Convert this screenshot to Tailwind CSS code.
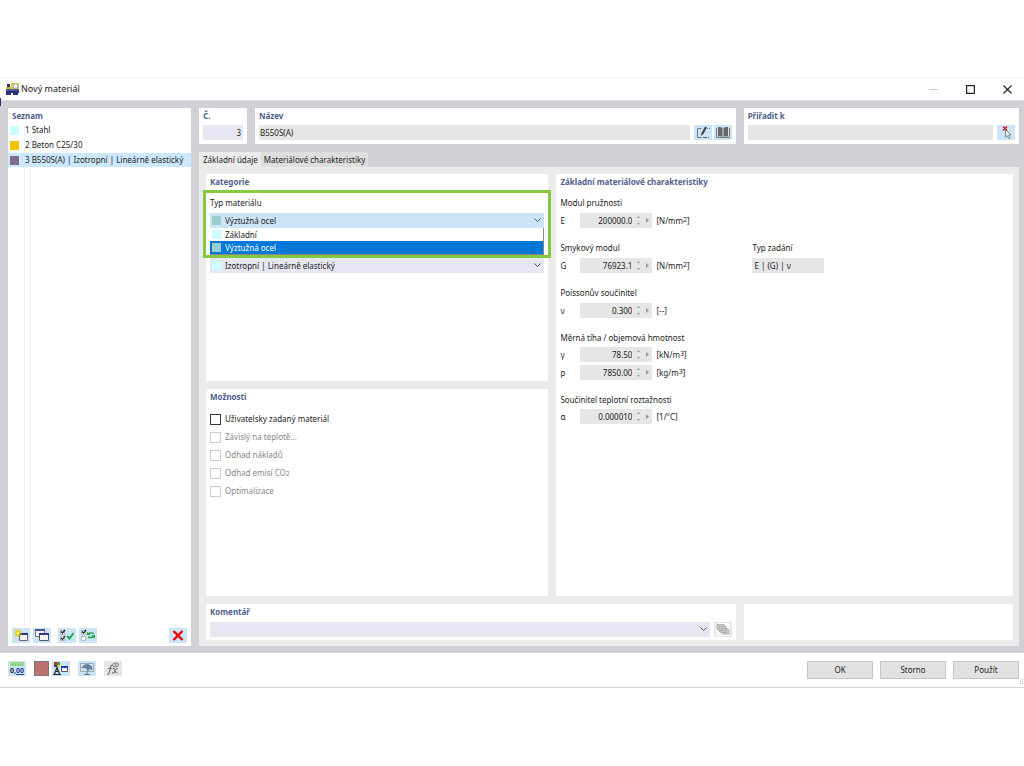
<!DOCTYPE html>
<html lang="cs">
<head>
    <meta charset="UTF-8">
    <meta name="viewport" content="width=device-width, initial-scale=1.0">
    <title>Nový materiál</title>
    <script src="https://cdn.jsdelivr.net/npm/@tailwindcss/browser@4"></script>
</head>
<body class="relative flex flex-col min-h-screen pt-[77px] pb-[78px] bg-white font-['Noto_Sans',sans-serif] text-[8px] leading-4 text-[#222]">

    <!-- Edge of the main window behind the dialog -->
    <span class="absolute left-0 top-[98px] w-px h-2 bg-[#2a2f7a]"></span>

    <div role="dialog" aria-labelledby="dialog-title" class="flex-1 flex flex-col border-t border-b border-t-[#eee] border-b-[#d4d4dc]">

        <!-- Title bar -->
        <header class="flex items-center h-[23px] pl-[6px] pr-3 border-b border-[#dcdcde]">
            <svg class="w-[13px] h-[12px]" viewBox="0 0 13 12">
                <path fill="#f2c230" d="M5 0h8v7H5z"/>
                <circle cx="9.500" cy="3.200" r="2.400" fill="#e8f2fa" stroke="#8fb4d8"/>
                <path fill="#2b3170" d="M1 1h3v3H1zM0 8h13v2H0zM0 10h5v2H0zM7 10h5v2H7z"/>
                <path fill="#c9b24c" d="M0 4h5v3H0z"/>
                <path fill="#4d5a93" d="M0 6h13v2H0z"/>
            </svg>
            <h1 id="dialog-title" class="ml-[2px] text-[9px]">Nový materiál</h1>
            <div class="ml-auto flex items-center gap-[28px]">
                <button aria-label="Minimalizovat" disabled><svg class="w-[9px] h-[9px]" viewBox="0 0 9 9"><path stroke="#ccc" d="M0 4.500h9"/></svg></button>
                <button aria-label="Maximalizovat"><svg class="w-[9px] h-[9px]" viewBox="0 0 9 9"><path fill="none" stroke="#222" stroke-width="1.200" d="M.6.6h7.8v7.8H.6z"/></svg></button>
                <button aria-label="Zavřít"><svg class="w-[9px] h-[9px]" viewBox="0 0 9 9"><path stroke="#222" stroke-width="1.100" d="M.5.5l8 8M8.500.5l-8 8"/></svg></button>
            </div>
        </header>

        <div class="flex-1 flex gap-2 pt-[7px] pb-[7px] pl-2 pr-[5px] bg-[#d0d0d6]">

            <!-- Material list -->
            <section class="w-[183px] flex flex-col bg-white">
                <h2 class="h-[15px] px-1 font-bold leading-[15px] text-[#4d5f8c]">Seznam</h2>
                <div class="relative flex-1">
                    <span class="absolute left-4 inset-y-0 w-[7px] border-x border-[#f3f3f7]"></span>
                    <ul class="relative flex flex-col gap-px leading-[14px]">
                        <li class="flex items-center h-[14px] pl-[2px]"><span class="w-[9px] h-[9px] mr-[6px] bg-[#ccffff]"></span>1 Stahl</li>
                        <li class="flex items-center h-[14px] pl-[2px]"><span class="w-[9px] h-[9px] mr-[6px] bg-[#f5c400]"></span>2 Beton C25/30</li>
                        <li class="flex items-center h-[14px] pl-[2px] bg-[#cce8ff]"><span class="w-[9px] h-[9px] mr-[6px] bg-[#806d8e]"></span>3 B550S(A) | Izotropní | Lineárně elastický</li>
                    </ul>
                </div>
                <div class="flex items-center gap-[3px] px-1 pb-[3px]">
                    <button aria-label="Nový" class="w-[18px] h-[15px] bg-[#cce4f7]">
                        <svg class="w-[18px] h-[15px]" viewBox="0 0 18 15">
                            <path fill="#f4f4f4" stroke="#666" d="M7.500 5.500h8v7h-8z"/><path fill="#2b3a80" d="M7 5h9v2H7z"/>
                            <path stroke="#d8c800" stroke-width="1.200" d="M6 1v8M2 5h8M3 2l6 6M9 2L3 8"/><circle cx="6" cy="5" r="1.600" fill="#fff36a"/>
                        </svg>
                    </button>
                    <button aria-label="Kopírovat" class="w-[18px] h-[15px] bg-[#cce4f7]">
                        <svg class="w-[18px] h-[15px]" viewBox="0 0 18 15">
                            <path fill="#f4f4f4" stroke="#777" d="M2.500 1.500h9v7h-9z"/><path fill="#4a5590" d="M2 1h10v2H2z"/>
                            <path fill="#f4f4f4" stroke="#555" d="M6.500 5.500h9v7h-9z"/><path fill="#2b3a80" d="M6 5h10v2H6z"/>
                        </svg>
                    </button>
                    <button aria-label="Vybrat vše" class="w-[18px] h-[15px] ml-1 bg-[#cce4f7]">
                        <svg class="w-[18px] h-[15px]" viewBox="0 0 18 15" fill="none">
                            <path fill="#fff" stroke="#aaa" stroke-width=".8" d="M2.500 2.500h4v4h-4zM2.500 8.500h4v4h-4z"/>
                            <path stroke="#222" stroke-width="1.200" d="M3 3.500l1.500 1.500L7 2M3 10l1.500 1.500L7 8"/>
                            <path stroke="#18a63c" stroke-width="1.800" d="M9 8l2.500 2.500L15.500 5"/>
                        </svg>
                    </button>
                    <button aria-label="Obrátit výběr" class="w-[18px] h-[15px] bg-[#cce4f7]">
                        <svg class="w-[18px] h-[15px]" viewBox="0 0 18 15" fill="none">
                            <path fill="#fff" stroke="#aaa" stroke-width=".8" d="M2.500 2.500h4v4h-4zM2.500 8.500h4v4h-4z"/>
                            <path stroke="#222" stroke-width="1.200" d="M3 3.500l1.500 1.500L7 2"/>
                            <path stroke="#18a63c" stroke-width="1.400" d="M9 6q2-2 6-.5M15 8q-2 2.500-6 1"/>
                            <path fill="#18a63c" d="M8 3.500V7h3.500zM16 10.500V7h-3.500z"/>
                        </svg>
                    </button>
                    <button aria-label="Smazat" class="w-[18px] h-[15px] ml-auto bg-[#cce4f7]">
                        <svg class="w-[18px] h-[15px]" viewBox="0 0 18 15"><path stroke="#f00000" stroke-width="2.400" d="M4.500 3l9 9M13.500 3l-9 9"/></svg>
                    </button>
                </div>
            </section>

            <div class="flex-1 flex flex-col">

                <!-- Number, name, assignment -->
                <div class="grid grid-cols-[48px_480fr_275fr] gap-2">
                    <section class="h-9 px-1 bg-white">
                        <label for="number" class="block h-[17px] font-bold leading-[15px] text-[#4d5f8c]">Č.</label>
                        <input id="number" value="3" class="block w-full h-[15px] px-[2px] bg-[#e7e7f3] text-right">
                    </section>
                    <section class="h-9 px-1 bg-white">
                        <label for="name" class="block h-[17px] font-bold leading-[15px] text-[#4d5f8c]">Název</label>
                        <div class="flex">
                            <input id="name" value="B550S(A)" readonly class="flex-1 h-[15px] px-px bg-[#e6e6e6]">
                            <button aria-label="Upravit název" class="ml-1 w-[18px] h-[15px] bg-[#cce4f7]">
                                <svg class="w-[18px] h-[15px]" viewBox="0 0 18 15" fill="none">
                                    <path stroke="#777" d="M7.500 3.500h-4v9h4"/><path stroke="#666" stroke-dasharray="4 1" d="M9 12.500h6"/><path stroke="#777" stroke-dasharray="1 1" d="M13 3.500h3"/>
                                    <path stroke="#444" stroke-width="2.200" d="M12 2L8.500 8.500"/><path fill="#444" d="M7.500 7.500l2 1.200L7 11z"/>
                                </svg>
                            </button>
                            <button aria-label="Knihovna materiálů" class="ml-[2px] w-[18px] h-[15px] bg-[#cce4f7]">
                                <svg class="w-[18px] h-[15px]" viewBox="0 0 18 15">
                                    <path fill="#666" d="M4 2q3-.5 4.500 1v9Q7 11 4 11.500zM14 2q-3-.5-4.500 1v9q1.500-1 4.500-.5z"/>
                                    <path fill="none" stroke="#777" d="M2.500 3v9.500H8l1 .5 1-.5h5.500V3"/>
                                </svg>
                            </button>
                        </div>
                    </section>
                    <section class="h-9 px-1 bg-white">
                        <label for="assign" class="block h-[17px] font-bold leading-[15px] text-[#4d5f8c]">Přiřadit k</label>
                        <div class="flex">
                            <input id="assign" readonly class="flex-1 h-[15px] bg-[#e6e6e6]">
                            <button aria-label="Vybrat objekty" class="ml-1 w-[18px] h-[15px] bg-[#cce4f7]">
                                <svg class="w-[18px] h-[15px]" viewBox="0 0 18 15">
                                    <path stroke="#e01020" stroke-width="1.400" d="M6 1.500l4 4M10 1.500l-4 4"/>
                                    <path fill="#fff" stroke="#666" stroke-width=".8" d="M8.500 4.500v7.500l1.700-1.500 1.500 3 1.400-.7-1.500-2.900h2.300z"/>
                                </svg>
                            </button>
                        </div>
                    </section>
                </div>

                <!-- Tabs -->
                <div role="tablist" class="flex mt-2">
                    <button role="tab" aria-selected="true" class="h-[15px] pl-1 pr-[3px] bg-[#ebebeb] leading-[15px]">Základní údaje</button>
                    <button role="tab" aria-selected="false" class="h-[15px] px-[3px] bg-[#dedede] leading-[15px]">Materiálové charakteristiky</button>
                </div>

                <div class="flex-1 flex flex-col gap-2 pt-[7px] pb-[6px] pl-[7px] pr-[6px] bg-[#ebebeb]">
                    <div class="flex-1 grid grid-cols-[3fr_4fr] grid-rows-2 gap-2">

                        <!-- Category -->
                        <section class="px-1 bg-white">
                            <h2 class="font-bold text-[#4d5f8c]">Kategorie</h2>
                            <div class="relative z-10 mt-[5px]">
                                <label for="material-type" class="block h-[18px]">Typ materiálu</label>
                                <div class="relative">
                                    <select id="material-type" class="block w-full h-[15px] pl-[15px] appearance-none bg-[#cce4f7]">
                                        <option>Výztužná ocel</option>
                                        <option>Základní</option>
                                    </select>
                                    <span class="absolute left-[2px] top-[3px] w-[9px] h-[9px] bg-[#99cccc]"></span>
                                    <svg class="absolute right-[3px] top-[5px] w-[7px] h-[5px]" viewBox="0 0 7 5"><path fill="none" stroke="#555" d="M.5.5l3 3 3-3"/></svg>
                                </div>
                                <ul role="listbox" aria-label="Typ materiálu" class="absolute inset-x-0 top-full bg-white border-r border-b border-[#888] leading-[13px]">
                                    <li role="option" aria-selected="false" class="flex items-center h-[13px] pl-[2px]"><span class="w-[9px] h-[9px] mr-1 bg-[#ccffff]"></span>Základní</li>
                                    <li role="option" aria-selected="true" class="flex items-center h-[13px] pl-[2px] bg-[#0078d7] text-white"><span class="w-[9px] h-[9px] mr-1 bg-[#99cccc]"></span>Výztužná ocel</li>
                                </ul>
                                <!-- Highlight frame -->
                                <div class="absolute -inset-x-[7px] -top-[5px] h-[68px] border-3 border-[#86c840] pointer-events-none"></div>
                            </div>
                            <div class="relative mt-[30px]">
                                <select aria-label="Materiálový model" class="block w-full h-[15px] pl-[15px] appearance-none bg-[#e7e7f3]">
                                    <option>Izotropní | Lineárně elastický</option>
                                </select>
                                <span class="absolute left-[2px] top-[3px] w-[9px] h-[9px] bg-[#ccffff]"></span>
                                <svg class="absolute right-[3px] top-[5px] w-[7px] h-[5px]" viewBox="0 0 7 5"><path fill="none" stroke="#555" d="M.5.5l3 3 3-3"/></svg>
                            </div>
                        </section>

                        <!-- Basic material properties -->
                        <section class="row-span-2 px-1 bg-white">
                            <h2 class="font-bold text-[#4d5f8c]">Základní materiálové charakteristiky</h2>
                            <div class="flex flex-col gap-3 mt-[5px]">
                                <div>
                                    <h3 class="h-[18px]">Modul pružnosti</h3>
                                    <div class="flex h-[15px] leading-[15px]">
                                        <label for="val-e" class="w-5">E</label>
                                        <div class="flex w-[72px] bg-[#e6e6e6]">
                                            <input id="val-e" value="200000.0" readonly class="w-[52px] text-right">
                                            <svg class="ml-1 w-4 h-[15px]" viewBox="0 0 16 15"><path fill="#999" d="M1 5l1.500-2L4 5zM1 10l1.500 2L4 10zM10 5l3 2.500-3 2.500z"/></svg>
                                        </div>
                                        <span class="ml-1">[N/mm<sup class="text-[7px] -top-[2px]">2</sup>]</span>
                                    </div>
                                </div>
                                <div class="grid grid-cols-[192px_1fr]">
                                    <div>
                                        <h3 class="h-[18px]">Smykový modul</h3>
                                        <div class="flex h-[15px] leading-[15px]">
                                            <label for="val-g" class="w-5">G</label>
                                            <div class="flex w-[72px] bg-[#e6e6e6]">
                                                <input id="val-g" value="76923.1" readonly class="w-[52px] text-right">
                                                <svg class="ml-1 w-4 h-[15px]" viewBox="0 0 16 15"><path fill="#999" d="M1 5l1.500-2L4 5zM1 10l1.500 2L4 10zM10 5l3 2.500-3 2.500z"/></svg>
                                            </div>
                                            <span class="ml-1">[N/mm<sup class="text-[7px] -top-[2px]">2</sup>]</span>
                                        </div>
                                    </div>
                                    <div>
                                        <label for="def-type" class="block h-[18px]">Typ zadání</label>
                                        <input id="def-type" value="E | (G) | ν" readonly class="block w-[72px] h-[15px] px-[2px] bg-[#e6e6e6]">
                                    </div>
                                </div>
                                <div>
                                    <h3 class="h-[18px]">Poissonův součinitel</h3>
                                    <div class="flex h-[15px] leading-[15px]">
                                        <label for="val-nu" class="w-5">ν</label>
                                        <div class="flex w-[72px] bg-[#e6e6e6]">
                                            <input id="val-nu" value="0.300" readonly class="w-[52px] text-right">
                                            <svg class="ml-1 w-4 h-[15px]" viewBox="0 0 16 15"><path fill="#999" d="M1 5l1.500-2L4 5zM1 10l1.500 2L4 10zM10 5l3 2.500-3 2.500z"/></svg>
                                        </div>
                                        <span class="ml-1">[--]</span>
                                    </div>
                                </div>
                                <div>
                                    <h3 class="h-[17px]">Měrná tíha / objemová hmotnost</h3>
                                    <div class="flex h-[15px] leading-[15px]">
                                        <label for="val-gamma" class="w-5">γ</label>
                                        <div class="flex w-[72px] bg-[#e6e6e6]">
                                            <input id="val-gamma" value="78.50" readonly class="w-[52px] text-right">
                                            <svg class="ml-1 w-4 h-[15px]" viewBox="0 0 16 15"><path fill="#999" d="M1 5l1.500-2L4 5zM1 10l1.500 2L4 10zM10 5l3 2.500-3 2.500z"/></svg>
                                        </div>
                                        <span class="ml-1">[kN/m<sup class="text-[7px] -top-[2px]">3</sup>]</span>
                                    </div>
                                    <div class="flex h-[15px] mt-[3px] leading-[15px]">
                                        <label for="val-rho" class="w-5">ρ</label>
                                        <div class="flex w-[72px] bg-[#e6e6e6]">
                                            <input id="val-rho" value="7850.00" readonly class="w-[52px] text-right">
                                            <svg class="ml-1 w-4 h-[15px]" viewBox="0 0 16 15"><path fill="#999" d="M1 5l1.500-2L4 5zM1 10l1.500 2L4 10zM10 5l3 2.500-3 2.500z"/></svg>
                                        </div>
                                        <span class="ml-1">[kg/m<sup class="text-[7px] -top-[2px]">3</sup>]</span>
                                    </div>
                                </div>
                                <div>
                                    <h3 class="h-[17px]">Součinitel teplotní roztažnosti</h3>
                                    <div class="flex h-[15px] leading-[15px]">
                                        <label for="val-alpha" class="w-5">α</label>
                                        <div class="flex w-[72px] bg-[#e6e6e6]">
                                            <input id="val-alpha" value="0.000010" readonly class="w-[52px] text-right">
                                            <svg class="ml-1 w-4 h-[15px]" viewBox="0 0 16 15"><path fill="#999" d="M1 5l1.500-2L4 5zM1 10l1.500 2L4 10zM10 5l3 2.500-3 2.500z"/></svg>
                                        </div>
                                        <span class="ml-1">[1/°C]</span>
                                    </div>
                                </div>
                            </div>
                        </section>

                        <!-- Options -->
                        <section class="px-1 bg-white">
                            <h2 class="font-bold text-[#4d5f8c]">Možnosti</h2>
                            <div class="mt-[5px] text-[#888]">
                                <label class="flex items-center gap-1 h-[18px] text-[#222]"><input type="checkbox" class="appearance-none w-[11px] h-[11px] border border-[#333]">Uživatelsky zadaný materiál</label>
                                <label class="flex items-center gap-1 h-[18px]"><input type="checkbox" disabled class="appearance-none w-[11px] h-[11px] border border-[#ccc]">Závislý na teplotě...</label>
                                <label class="flex items-center gap-1 h-[18px]"><input type="checkbox" disabled class="appearance-none w-[11px] h-[11px] border border-[#ccc]">Odhad nákladů</label>
                                <label class="flex items-center gap-1 h-[18px]"><input type="checkbox" disabled class="appearance-none w-[11px] h-[11px] border border-[#ccc]"><span>Odhad emisí CO<sub class="text-[7px] bottom-0">2</sub></span></label>
                                <label class="flex items-center gap-1 h-[18px]"><input type="checkbox" disabled class="appearance-none w-[11px] h-[11px] border border-[#ccc]">Optimalizace</label>
                            </div>
                        </section>
                    </div>

                    <!-- Comment -->
                    <div class="grid grid-cols-[530fr_269fr] gap-2">
                        <section class="h-9 px-1 bg-white">
                            <label for="comment" class="block h-[18px] font-bold text-[#4d5f8c]">Komentář</label>
                            <div class="flex">
                                <div class="relative flex-1">
                                    <select id="comment" class="block w-full h-[15px] appearance-none bg-[#e7e7f3]"><option></option></select>
                                    <svg class="absolute right-[3px] top-[5px] w-[7px] h-[5px]" viewBox="0 0 7 5"><path fill="none" stroke="#555" d="M.5.5l3 3 3-3"/></svg>
                                </div>
                                <button aria-label="Upravit komentáře" disabled class="ml-1 w-[18px] h-[15px] bg-[#e6e6e6]">
                                    <svg class="w-[18px] h-[15px]" viewBox="0 0 18 15">
                                        <path fill="#f8f8f8" d="M2 1h14v13H2z"/>
                                        <path fill="#ccc" stroke="#aaa" stroke-width=".8" d="M3 2.500h7l1 1v5H4.500L3 7zM5 4.500h6l1.500 1v5H6.500L5 9zM7 6.500h6l2 1.500v4H9l-2-1.500z"/>
                                    </svg>
                                </button>
                            </div>
                        </section>
                        <section class="bg-white"></section>
                    </div>
                </div>
            </div>
        </div>

        <!-- Bottom bar -->
        <footer class="relative flex items-start h-[34px] pt-2 pl-2 pr-[5px]">
            <button aria-label="Jednotky" class="w-[18px] h-[15px] bg-[#cce4f7]">
                <svg class="w-[18px] h-[15px]" viewBox="0 0 18 15">
                    <path fill="#9bdd8b" d="M2 1h14v4H2z"/><path stroke="#7cc46c" d="M4.500 3v2M7.500 3v2M10.500 3v2M13.500 3v2"/>
                    <text x="2" y="12" font-size="7" font-weight="bold" fill="#222">0,</text><text x="8" y="12" font-size="7" font-weight="bold" fill="#26408a">00</text>
                    <path stroke="#26408a" d="M8 13.500h8"/>
                </svg>
            </button>
            <button aria-label="Barva" class="ml-2 w-[15px] h-[15px] bg-[#bd7070] border border-[#777]"></button>
            <button aria-label="Zobrazení" class="ml-[3px] w-[18px] h-[15px] bg-[#cce4f7]">
                <svg class="w-[18px] h-[15px]" viewBox="0 0 18 15">
                    <path fill="#e02020" d="M2 1h3v3H2z"/><path fill="#20b030" d="M5 1h3v3H5z"/><path fill="#2040d0" d="M2 4h3v2H2z"/><path fill="#f0d000" d="M5 4h3v2H5z"/>
                    <path fill="none" stroke="#222" stroke-width="1.200" d="M2.500 13L5 6.500 7.500 13M3.500 10.500h3M1 13.500h8"/>
                    <path fill="#fff" stroke="#555" d="M9.500 5.500h6v5h-6z"/><path fill="#2b3aa0" d="M9 5h7v2H9z"/>
                </svg>
            </button>
            <button aria-label="Obrazovka" class="ml-2 w-[18px] h-[15px] bg-[#cce4f7]">
                <svg class="w-[18px] h-[15px]" viewBox="0 0 18 15">
                    <path fill="#d4e4f0" stroke="#8a9aaa" stroke-width=".8" d="M2.500 2.500h13v8h-13z"/>
                    <path fill="#5f88aa" stroke="#456" stroke-width=".6" d="M4 6.500q4-5.500 9.500-1l.5 3-3-1-1 2.500L8.500 7z"/>
                    <path stroke="#777" d="M9 10.500v3M6 13.500h6"/>
                </svg>
            </button>
            <button aria-label="Vzorec" disabled class="ml-2 w-[18px] h-[15px] bg-[#e6e6e6]">
                <svg class="w-[18px] h-[15px]" viewBox="0 0 18 15" fill="none" stroke="#777">
                    <path stroke-width="1.200" d="M3 13.500q2 0 2.500-3L6.500 6Q7 4 8.500 4M4 7.500h4M8.500 7.500q2-.5 2.500 2t2.500 2.500M14 7.500q-2 0-3 2.500T8 12"/>
                    <ellipse cx="11.500" cy="4" rx="3" ry="2"/><circle cx="11.500" cy="4" r=".6"/>
                </svg>
            </button>
            <div class="ml-auto flex gap-[7px]">
                <button class="w-[66px] h-[18px] bg-[#e1e1e1] border border-[#c6c6c6]">OK</button>
                <button class="w-[66px] h-[18px] bg-[#e1e1e1] border border-[#c6c6c6]">Storno</button>
                <button class="w-[66px] h-[18px] bg-[#e1e1e1] border border-[#c6c6c6]">Použít</button>
            </div>
            <svg class="absolute right-0 bottom-[2px] w-[4px] h-[6px]" viewBox="0 0 4 6"><path fill="#bbb" d="M2 0h1v1H2zM0 2h1v1H0zM2 2h1v1H2zM0 4h1v1H0zM2 4h1v1H2z"/></svg>
        </footer>
    </div>
</body>
</html>
